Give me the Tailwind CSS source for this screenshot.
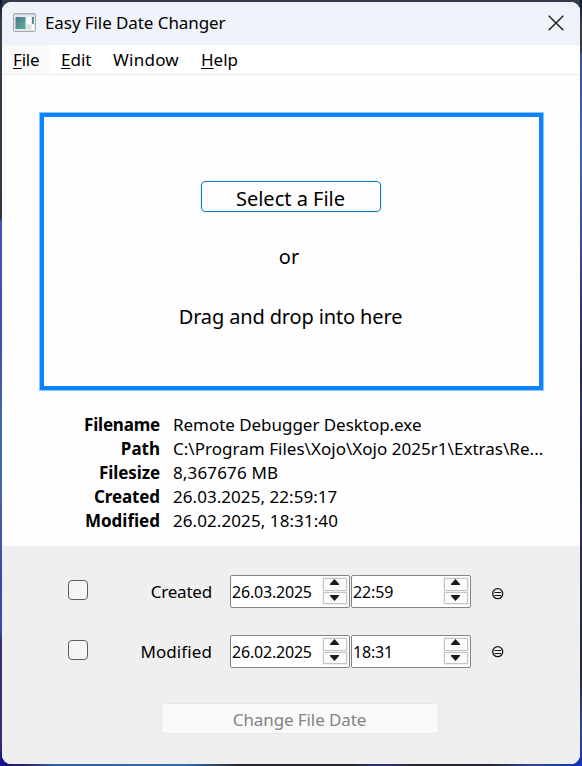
<!DOCTYPE html>
<html lang="en">
<head>
<meta charset="utf-8">
<title>Easy File Date Changer</title>
<script src="https://cdn.jsdelivr.net/npm/@tailwindcss/browser@4"></script>
</head>
<body class="flex h-[766px] w-[582px] overflow-hidden bg-[#232b49] font-['Noto_Sans',sans-serif] text-black">
<div class="w-[2px] shrink-0 bg-[linear-gradient(180deg,#0d1a3c,#343d4c_3%,#2f3745_28.500%,#3f54b8_29%,#3c50b0_45%,#4468b0_56%,#4565b0_64%,#3c44ac_76%,#3a4cb0_82%,#2f2f74_84%,#30306e_97%,#10109a)]"></div>
<div class="w-[578px] shrink-0 bg-[linear-gradient(180deg,#343b4a_50%,transparent_50%),linear-gradient(90deg,#12128a,#28265a_4%,#35649e_9%,#356aa8_32%,#28252e_41%,#28252e_60%,#2c3470_65%,#28252e_72%,#252337_84%,#2d4a90_92%,#1532c0)] py-[2px]">
<main class="flex h-[762px] w-[578px] flex-col overflow-hidden rounded-[9px] bg-[#fefefe]">
  <header class="flex h-[43px] shrink-0 items-center bg-[#f0f2f9] pl-[11px] pr-[16px]">
    <svg class="mt-[-2px] h-[20px] w-[23px] shrink-0" viewBox="0 0 23 20">
      <defs><linearGradient id="screen" x1="0" y1="0" x2="1" y2="1"><stop stop-color="#47739a"/><stop offset="1" stop-color="#62b287"/></linearGradient></defs>
      <rect x=".5" y=".5" width="22" height="18" rx="1" fill="#e7e9eb" stroke="#a5a9b0"/>
      <path d="M1 1.500H22" stroke="#c9ccd2"/>
      <rect x="2.500" y="4" width="10" height="12" fill="url(#screen)"/>
      <rect x="13.500" y="4" width="4" height="7" fill="#fff"/><rect x="13.500" y="12" width="4" height="4" fill="#dde0e2"/>
      <rect x="19" y="4" width="2" height="7" fill="url(#screen)"/><rect x="19" y="12" width="2" height="4" fill="#fff"/>
    </svg>
    <h1 class="ml-[9px] mt-[-2px] whitespace-nowrap text-[17px] leading-[24px] tracking-[-0.080px]">Easy File Date Changer</h1>
    <svg class="ml-auto mt-[-2px] h-[16px] w-[16px] shrink-0" viewBox="0 0 16 16"><path d="M.7.7l14.600 14.600M15.300.7L.7 15.300" stroke="#1b1b1b" stroke-width="1.400"/></svg>
  </header>
  <nav class="flex h-[30px] shrink-0 items-center border-b border-[#ededed] bg-white text-[17px] leading-[24px]">
    <span class="flex h-[29px] w-[48px] items-center rounded-[3px] bg-[#f9f9f9] pl-[11px] pt-px tracking-[-0.200px]"><u class="underline-offset-2">F</u>ile</span>
    <span class="w-[52px] pl-[11px] pt-px"><u class="underline-offset-2">E</u>dit</span>
    <span class="w-[88px] pl-[11px] pt-px tracking-[0.250px]">Window</span>
    <span class="pl-[11px] pt-px"><u class="underline-offset-2">H</u>elp</span>
  </nav>
  <section class="flex h-[471px] shrink-0 flex-col pt-[38px]">
    <div class="ml-[38px] flex h-[277px] w-[503px] shrink-0 flex-col items-center border-4 border-[#0a84ff] pr-[2px] pt-[63px] text-[20px] leading-[30px] outline outline-[#8cc5ff]">
      <button class="mt-[1px] h-[31px] w-[180px] rounded-[4px] border border-[#0078d4] bg-[#fdfdfd] pt-[2px] leading-[30px] outline outline-[#f0f0f0]">Select a File</button>
      <p class="mt-[30px] pr-[3px]">or</p>
      <p class="mt-[30px] whitespace-nowrap tracking-[-0.140px]">Drag and drop into here</p>
    </div>
    <dl class="mt-[23px] grid grid-cols-[158px_1fr] gap-x-[13px] text-[17px] leading-[24px]">
      <dt class="text-right font-bold tracking-[-0.200px]">Filename</dt><dd class="tracking-[-0.040px]">Remote Debugger Desktop.exe</dd>
      <dt class="text-right font-bold">Path</dt><dd class="whitespace-nowrap tracking-[0.025px]">C:\Program Files\Xojo\Xojo 2025r1\Extras\Re...</dd>
      <dt class="text-right font-bold tracking-[-0.100px]">Filesize</dt><dd class="tracking-[0.150px]">8,367676 MB</dd>
      <dt class="text-right font-bold tracking-[-0.100px]">Created</dt><dd class="tracking-[0.050px]">26.03.2025, 22:59:17</dd>
      <dt class="text-right font-bold">Modified</dt><dd class="tracking-[0.080px]">26.02.2025, 18:31:40</dd>
    </dl>
  </section>
  <section class="flex h-[218px] shrink-0 flex-col bg-[#efefef] pt-[29px] text-[17px] leading-[24px]">
    <div class="flex h-[60px] items-start pl-[66px]">
      <span class="mt-[5px] h-[20px] w-[20px] rounded-[4px] border border-[#5f5f5f] bg-[#f5f5f5]"></span>
      <label class="mt-[5px] w-[124px] text-right tracking-[-0.200px]">Created</label>
      <div class="ml-[18px] flex h-[33px] w-[120px] items-center justify-between rounded-[2px] border border-[#858585] bg-white pl-px pr-[1px]">
        <span class="text-[16px] tracking-[-0.200px]">26.03.2025</span>
        <svg class="mt-[-1px] h-[28px] w-[26px] shrink-0" viewBox="0 0 26 28"><path d="M0 0H26V28H0z" fill="#f0f0f0"/><path d="M1.500 1.500H24.500V13.500H1.500zM1.500 15.500H24.500V26.500H1.500z" fill="#fbfbfb" stroke="#c4c4c4"/><path d="M12.500 2L17 7V8H8V7zM8 18H17V19L12.500 24 8 19z" fill="#1b1b1b"/></svg>
      </div>
      <div class="ml-px flex h-[33px] w-[120px] items-center justify-between rounded-[2px] border border-[#858585] bg-white pl-px pr-[1px]">
        <span class="text-[16px] tracking-[-0.100px]">22:59</span>
        <svg class="mt-[-1px] h-[28px] w-[26px] shrink-0" viewBox="0 0 26 28"><path d="M0 0H26V28H0z" fill="#f0f0f0"/><path d="M1.500 1.500H24.500V13.500H1.500zM1.500 15.500H24.500V26.500H1.500z" fill="#fbfbfb" stroke="#c4c4c4"/><path d="M12.500 2L17 7V8H8V7zM8 18H17V19L12.500 24 8 19z" fill="#1b1b1b"/></svg>
      </div>
      <svg class="ml-[21px] mt-[13px] h-[12px] w-[12px]" viewBox="0 0 12 12"><circle cx="5.700" cy="5.700" r="5" fill="none" stroke="#111" stroke-width="1.300"/><path d="M2.500 4.500H9M2.500 7.500H9" stroke="#111"/></svg>
    </div>
    <div class="flex h-[60px] items-start pl-[66px]">
      <span class="mt-[5px] h-[20px] w-[20px] rounded-[4px] border border-[#5f5f5f] bg-[#f5f5f5]"></span>
      <label class="mt-[5px] w-[124px] text-right tracking-[0.100px]">Modified</label>
      <div class="ml-[18px] flex h-[33px] w-[120px] items-center justify-between rounded-[2px] border border-[#858585] bg-white pl-px pr-[1px]">
        <span class="text-[16px] tracking-[-0.200px]">26.02.2025</span>
        <svg class="mt-[-1px] h-[28px] w-[26px] shrink-0" viewBox="0 0 26 28"><path d="M0 0H26V28H0z" fill="#f0f0f0"/><path d="M1.500 1.500H24.500V13.500H1.500zM1.500 15.500H24.500V26.500H1.500z" fill="#fbfbfb" stroke="#c4c4c4"/><path d="M12.500 2L17 7V8H8V7zM8 18H17V19L12.500 24 8 19z" fill="#1b1b1b"/></svg>
      </div>
      <div class="ml-px flex h-[33px] w-[120px] items-center justify-between rounded-[2px] border border-[#858585] bg-white pl-px pr-[1px]">
        <span class="text-[16px] tracking-[-0.200px]">18:31</span>
        <svg class="mt-[-1px] h-[28px] w-[26px] shrink-0" viewBox="0 0 26 28"><path d="M0 0H26V28H0z" fill="#f0f0f0"/><path d="M1.500 1.500H24.500V13.500H1.500zM1.500 15.500H24.500V26.500H1.500z" fill="#fbfbfb" stroke="#c4c4c4"/><path d="M12.500 2L17 7V8H8V7zM8 18H17V19L12.500 24 8 19z" fill="#1b1b1b"/></svg>
      </div>
      <svg class="ml-[21px] mt-[11px] h-[12px] w-[12px]" viewBox="0 0 12 12"><circle cx="5.700" cy="5.700" r="5" fill="none" stroke="#111" stroke-width="1.300"/><path d="M2.500 4.500H9M2.500 7.500H9" stroke="#111"/></svg>
    </div>
    <button class="ml-[159px] mt-[8px] h-[31px] w-[278px] rounded-[4px] border border-[#e7e7e7] bg-[#f9f9f9] pr-[1px] pt-[2px] leading-[24px] tracking-[-0.100px] text-[#838383]" disabled>Change File Date</button>
  </section>
</main>
</div>
<div class="w-[2px] shrink-0 bg-[linear-gradient(180deg,#0a1530,#343d4c_3%,#343d4c_6.800%,#3650a0_7%,#3a5cb0_14%,#3768b4_20%,#3b4a9c_32%,#30346c_42%,#2b2a50_50%,#2c3470_52%,#2b2a3c_63%,#2c3058_67%,#2b2a38_88%,#2d4a90_95%,#1532c0)]"></div>
</body>
</html>
